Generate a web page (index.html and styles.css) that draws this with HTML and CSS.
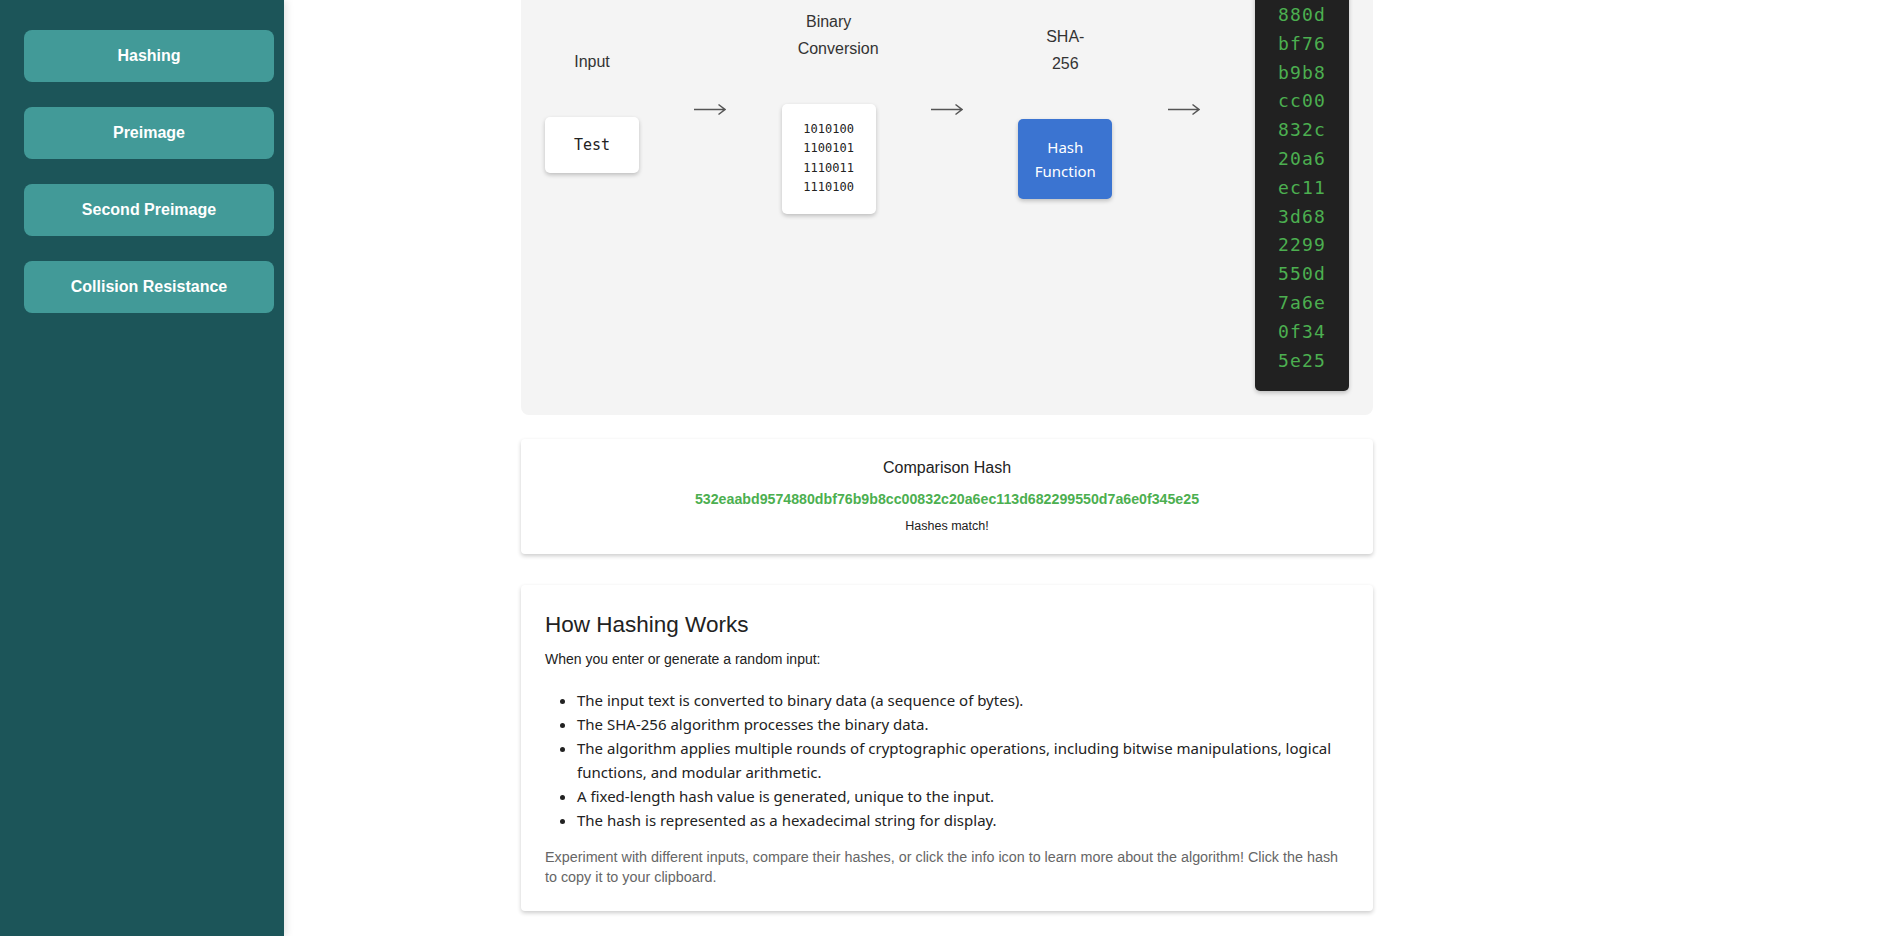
FILE: index.html
```html
<!DOCTYPE html>
<html lang="en">
<head>
<meta charset="utf-8">
<title>Hashing</title>
<link rel="stylesheet" href="styles.css">
</head>
<body>
<aside class="sidebar">
  <button class="nav-btn">Hashing</button>
  <button class="nav-btn">Preimage</button>
  <button class="nav-btn">Second Preimage</button>
  <button class="nav-btn">Collision Resistance</button>
</aside>
<main class="main">
  <div class="content">
    <section class="flow">
      <div class="step">
        <div class="step-label">Input</div>
        <div class="box input-box">Test</div>
      </div>
      <svg class="arrow" viewBox="0 0 32 14"><path d="M0 7.5 H31 M24.5 2.5 L31 7.5 L24.5 12.5"/></svg>
      <div class="step">
        <div class="step-label">Binary Conversion</div>
        <div class="box binary-box">1010100<br>1100101<br>1110011<br>1110100</div>
      </div>
      <svg class="arrow" viewBox="0 0 32 14"><path d="M0 7.5 H31 M24.5 2.5 L31 7.5 L24.5 12.5"/></svg>
      <div class="step">
        <div class="step-label">SHA-256</div>
        <div class="box hash-fn">Hash Function</div>
      </div>
      <svg class="arrow" viewBox="0 0 32 14"><path d="M0 7.5 H31 M24.5 2.5 L31 7.5 L24.5 12.5"/></svg>
      <div class="step">
        <div class="step-label">Output</div>
        <div class="box hash-out">532e aabd 9574 880d bf76 b9b8 cc00 832c 20a6 ec11 3d68 2299 550d 7a6e 0f34 5e25</div>
      </div>
    </section>

    <section class="card compare">
      <div class="cmp-title">Comparison Hash</div>
      <div class="cmp-hash">532eaabd9574880dbf76b9b8cc00832c20a6ec113d682299550d7a6e0f345e25</div>
      <div class="cmp-status">Hashes match!</div>
    </section>

    <section class="card info">
      <h2 class="info-title">How Hashing Works</h2>
      <p class="info-intro">When you enter or generate a random input:</p>
      <ul class="info-list">
        <li>The input text is converted to binary data (a sequence of bytes).</li>
        <li>The SHA-256 algorithm processes the binary data.</li>
        <li>The algorithm applies multiple rounds of cryptographic operations, including bitwise manipulations, logical functions, and modular arithmetic.</li>
        <li>A fixed-length hash value is generated, unique to the input.</li>
        <li>The hash is represented as a hexadecimal string for display.</li>
      </ul>
      <p class="info-note">Experiment with different inputs, compare their hashes, or click the info icon to learn more about the algorithm! Click the hash to copy it to your clipboard.</p>
    </section>
  </div>
</main>
</body>
</html>
```
FILE: styles.css
```css
* { box-sizing: border-box; }
html, body { margin: 0; height: 100%; }
body {
  display: flex;
  overflow: hidden;
  background: #ffffff;
  color: #222;
  font-family: "Liberation Sans", Arial, sans-serif;
}

.sidebar {
  width: 284px;
  flex-shrink: 0;
  height: 100vh;
  background: #1c5559;
  padding: 30px 10px 0 24px;
  display: flex;
  flex-direction: column;
  gap: 25px;
  box-shadow: 2px 0 8px rgba(0, 0, 0, 0.12);
  position: relative;
  z-index: 1;
}
.nav-btn {
  height: 52px;
  border: 0;
  border-radius: 8px;
  background: #429a98;
  color: #ffffff;
  font: bold 16px "Liberation Sans", Arial, sans-serif;
  cursor: pointer;
}

.main { flex: 1; overflow: hidden; }
.content {
  width: 852px;
  margin: -194px 0 0 237px;
  display: flex;
  flex-direction: column;
}

.flow {
  background: #f4f4f4;
  border-radius: 8px;
  padding: 24px;
  display: flex;
  justify-content: space-between;
  align-items: center;
}
.step {
  width: 94px;
  display: flex;
  flex-direction: column;
  align-items: center;
}
.step-label {
  width: 94px;
  padding: 0 16px;
  text-align: center;
  font-size: 16px;
  line-height: 27.6px;
  color: #333;
  margin-bottom: 41px;
}
.box {
  width: 94px;
  padding: 16px;
  border-radius: 5px;
  box-shadow: 0 2px 4px rgba(0, 0, 0, 0.22);
  text-align: center;
}
.input-box {
  background: #fff;
  font-family: "DejaVu Sans Mono", monospace;
  font-size: 15px;
  line-height: 24px;
  color: #222;
}
.binary-box {
  background: #fff;
  font-family: "DejaVu Sans Mono", monospace;
  font-size: 12px;
  line-height: 19.4px;
  color: #222;
}
.hash-fn {
  background: #3b74d1;
  color: #fff;
  font-family: "Noto Sans", sans-serif;
  font-size: 15px;
  line-height: 24px;
}
.hash-out {
  background: #212121;
  color: #4caf50;
  font-family: "DejaVu Sans Mono", monospace;
  font-size: 18px;
  line-height: 28.8px;
  letter-spacing: 1.2px;
}
.arrow {
  width: 32px;
  height: 14px;
  margin-bottom: 4px;
  fill: none;
  stroke: #555;
  stroke-width: 1.5;
}

.card {
  background: #fff;
  border-radius: 4px;
  box-shadow: 0 2px 4px rgba(0, 0, 0, 0.2);
}
.compare {
  margin-top: 24px;
  padding: 20px;
  text-align: center;
}
.cmp-title {
  font-size: 16px;
  line-height: 18px;
  margin-bottom: 14px;
  color: #222;
}
.cmp-hash {
  font-weight: bold;
  font-size: 14.2px;
  line-height: 16px;
  color: #4caf50;
  margin-bottom: 12px;
}
.cmp-status {
  font-size: 12.5px;
  line-height: 15px;
  color: #222;
}

.info {
  margin-top: 31px;
  padding: 24px;
}
.info-title {
  margin: 0 0 8px;
  font-size: 22.5px;
  line-height: 32px;
  font-weight: normal;
  color: #222;
}
.info-intro {
  margin: 0;
  font-size: 14px;
  line-height: 20px;
  color: #222;
}
.info-list {
  margin: 19px 0 15px;
  padding-left: 32px;
  font-family: "Noto Sans", sans-serif;
  font-size: 15px;
  line-height: 24px;
  color: #222;
}
.info-note {
  margin: 0;
  font-size: 14.35px;
  line-height: 20px;
  color: #666;
}
```
